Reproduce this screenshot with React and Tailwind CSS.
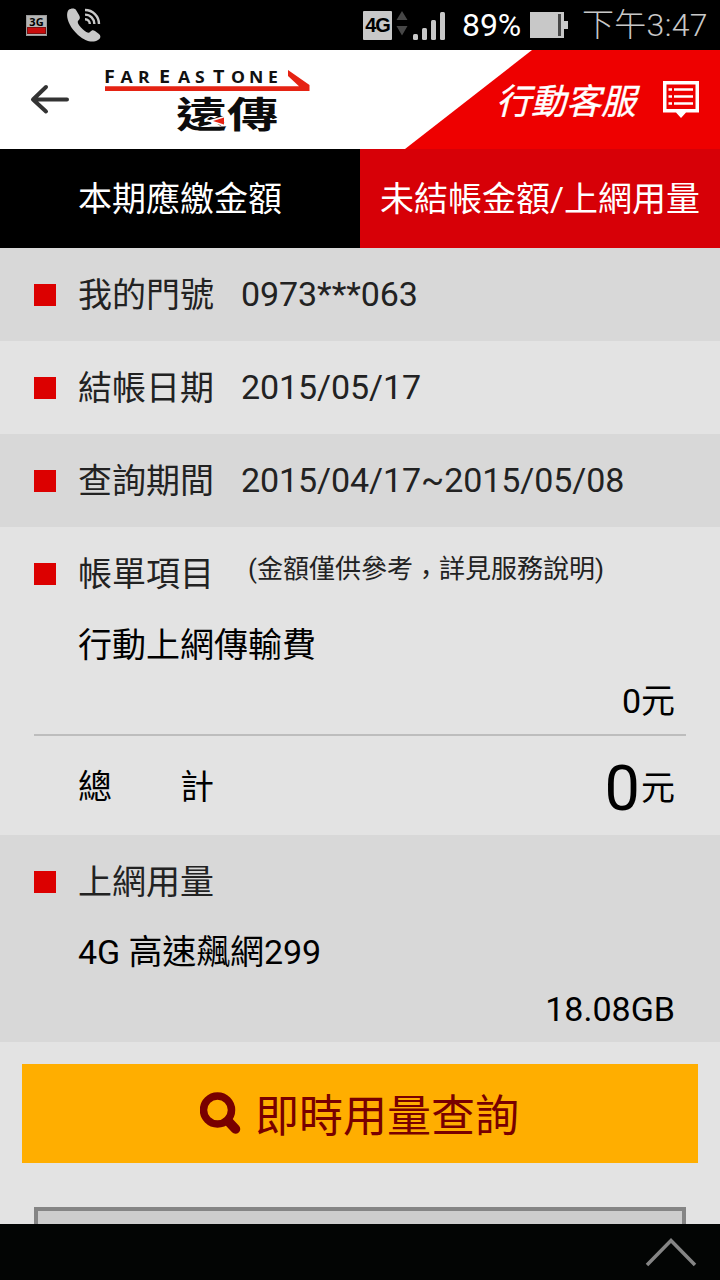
import React from 'react';

const infoRows = [
    { label: '我的門號', value: '0973***063', bg: 'bg-[#d8d8d8]' },
    { label: '結帳日期', value: '2015/05/17', bg: 'bg-[#e3e3e3]' },
    { label: '查詢期間', value: '2015/04/17~2015/05/08', bg: 'bg-[#d8d8d8]' },
];

// x position and size of every letter in the wordmark
const logoLetters = [
    { char: 'F', x: 104, size: 18 },
    { char: 'A', x: 120.5, size: 16 },
    { char: 'R', x: 138, size: 16 },
    { char: 'E', x: 159, size: 18 },
    { char: 'A', x: 178, size: 16 },
    { char: 'S', x: 195, size: 16 },
    { char: 'T', x: 213, size: 18 },
    { char: 'O', x: 231, size: 16 },
    { char: 'N', x: 249, size: 16 },
    { char: 'E', x: 268, size: 16 },
];

function StatusBar() {
    return (
        <div className="flex h-[50px] shrink-0 items-center bg-black">
            <div className="ml-[26px] flex h-[21px] w-[21px] flex-col border border-[#9a9a9a] bg-[#b5b5b5]">
                <span className="h-[11px] text-center font-['Open_Sans',sans-serif] text-[11px] leading-[11px] font-bold text-black">3G</span>
                <span className="h-[7px] border border-[#7a1010] bg-[#c80c0c]"></span>
            </div>
            <svg className="ml-[19px]" width="36" height="38" viewBox="66 6 36 38">
                <path d="M68.500 10C71 8 75 8 76 10L79 15C80.500 18 80 19 78 21C77 22.500 79 25.500 83 29.500C87 33 89 33.500 90 32C92 30 93 30 95 31L99 34C101 36 101 38 98 40C93 43 86 42 78 35C68 26 65 15 68.500 10Z" fill="#c8c8c8" />
                <path d="M85 10a14 14 0 0 1 14 14M85 14.600a9.400 9.400 0 0 1 9.400 9.400M85 19.200a4.800 4.800 0 0 1 4.800 4.800" fill="none" stroke="#c8c8c8" strokeWidth="2.400" />
            </svg>
            <div className="ml-[261px] flex h-[29px] w-[29px] items-center justify-center rounded-[1px] bg-[#c8c8c8] font-['Liberation_Sans',sans-serif] text-[20px] font-bold tracking-tighter text-black">
                4G
            </div>
            <svg className="ml-[4px]" width="50" height="32" viewBox="396 10 50 32">
                <path d="M396.500 21L402 12L407.500 21ZM396.500 27H407.500L402 36.500Z" fill="#474747" />
                <rect x="413" y="35" width="5" height="6" rx="1.500" fill="#c8c8c8" />
                <rect x="422" y="29" width="5" height="12" rx="1.500" fill="#c8c8c8" />
                <rect x="431" y="21" width="5" height="20" rx="1.500" fill="#c8c8c8" />
                <rect x="440" y="13" width="5" height="28" rx="1.500" fill="#c8c8c8" />
            </svg>
            <span className="ml-[16px] w-[60px] text-[32px] leading-[50px] tracking-[-0.1px] text-white">89%</span>
            <svg className="ml-[8px]" width="38" height="26" viewBox="530 12 38 26">
                <path d="M530 12H564V21H568V29H564V38H530Z" fill="#c8c8c8" />
                <rect x="558" y="14" width="3" height="22" fill="#474747" />
            </svg>
            <span className="ml-[14px] text-[32px] leading-[50px] font-light tracking-[0.3px] whitespace-nowrap text-[#c8c8c8]">下午3:47</span>
        </div>
    );
}

function Logo() {
    return (
        <svg className="ml-[31px] overflow-visible" width="214" height="94" viewBox="100 53 214 94">
            {logoLetters.map((item, index) => (
                <text key={index} transform={`translate(${item.x} 82.8) scale(1.1 1)`} fontSize={item.size} fontWeight="700" fontFamily="'Open Sans', sans-serif" fill="#111">
                    {item.char}
                </text>
            ))}
            <path d="M105 86.300H299L288 76V70L309.500 85V91H105Z" fill="#e52313" />
            <text transform="translate(176 127.500) scale(1.42 1)" fontSize="36" fontWeight="700" fontFamily="'Noto Sans CJK TC', sans-serif" fill="#0c0c0c">
                遠傳
            </text>
            <path d="M206 121L224 116V126Z" fill="#fff" />
            <path d="M213 121L224 117.500V124.500Z" fill="#e52313" />
        </svg>
    );
}

function Header() {
    return (
        <div className="flex h-[99px] shrink-0 bg-white">
            <div className="flex items-center">
                <svg className="ml-[30px]" width="40" height="32" viewBox="30 84 40 32">
                    <path d="M67 99.500H34M46 87L33 99.500L46 111.500" fill="none" stroke="#333" strokeWidth="4" strokeLinecap="round" strokeLinejoin="round" />
                </svg>
                <div className="-ml-px">
                    <Logo />
                </div>
            </div>
            <div className="ml-auto flex w-[315px] items-center bg-[#ee0000] [clip-path:polygon(127px_0,100%_0,100%_100%,0_100%)]">
                <span className="ml-[91px] pt-[6px] text-[35px] leading-[48px] text-white italic [-webkit-text-stroke:0.4px_white]">行動客服</span>
                <svg className="ml-[27px]" width="36" height="38" viewBox="663 81 36 38">
                    <path d="M663 81H699V112.500H686L681 118L676 112.500H663ZM666.500 84.500V109H695.500V84.500Z" fill="#fff" fillRule="evenodd" />
                    <path d="M668.500 89.500H672M668.500 96.500H672M668.500 103.500H672M674 89.500H693M674 96.500H693M674 103.500H693" stroke="#fff" strokeWidth="2.600" />
                </svg>
            </div>
        </div>
    );
}

function Title({ label, children }) {
    return (
        <div className="flex h-[93px] items-center pl-[34px] text-[#222]">
            <span className="mt-px h-[22px] w-[22px] bg-[#dc0000]"></span>
            <span className="ml-[22px] w-[163px]">{label}</span>
            {children}
        </div>
    );
}

function App() {
    return (
        <div className="flex h-[1280px] w-[720px] flex-col overflow-hidden bg-[#e3e3e3] font-[Roboto,'Noto_Sans_CJK_TC',sans-serif] text-[34px] leading-[48px] text-black" lang="zh-TW">
            <StatusBar />
            <Header />
            <div className="grid h-[99px] shrink-0 grid-cols-2 text-white">
                <button className="bg-black">本期應繳金額</button>
                <button className="bg-[#d70007] whitespace-nowrap">未結帳金額/上網用量</button>
            </div>

            {infoRows.map((item, index) => (
                <div key={index} className={item.bg}>
                    <Title label={item.label}>
                        <span className="mb-[2px] tracking-[-0.08px]">{item.value}</span>
                    </Title>
                </div>
            ))}

            <div className="h-[308px] shrink-0 bg-[#e3e3e3]">
                <Title label="帳單項目">
                    <span className="mb-[9px] ml-[7px] text-[26px]">
                        (金額僅供參考<span className="relative top-[6px]">，</span>詳見服務說明)
                    </span>
                </Title>
                <div className="pt-px pl-[78px] leading-[48px]">行動上網傳輸費</div>
                <div className="pr-[45px] text-right leading-[65px]">0元</div>
                <div className="mx-[34px] h-[2px] bg-[#bdbdbd]"></div>
                <div className="flex h-[99px] items-center justify-between pr-[45px] pl-[78px]">
                    <span className="pt-[2px]">總　　計</span>
                    <span className="flex items-center">
                        <span className="pt-[7px] pr-px text-[63px]">0</span>
                        <span className="pt-[5px]">元</span>
                    </span>
                </div>
            </div>

            <div className="h-[207px] shrink-0 bg-[#d8d8d8]">
                <Title label="上網用量" />
                <div className="pl-[78px] leading-[49px] tracking-[-0.1px]">4G 高速飆網299</div>
                <div className="pr-[45px] text-right leading-[65px]">18.08GB</div>
            </div>

            <button className="mx-[22px] mt-[22px] flex h-[99px] shrink-0 items-center bg-[#ffae00] pl-[178px] text-[44px] text-[#780000]">
                <svg width="42" height="44" viewBox="0 0 42 44">
                    <circle cx="17.500" cy="18" r="14" fill="none" stroke="currentColor" strokeWidth="7.500" />
                    <path d="M28 29L35.500 37" stroke="currentColor" strokeWidth="9.500" strokeLinecap="round" />
                </svg>
                <span className="ml-[13px] pt-[6px]">即時用量查詢</span>
            </button>

            <div className="mx-[34px] mt-[44px] min-h-0 flex-1 border-4 border-b-0 border-[#858585] bg-[#cdcdcd]"></div>

            <div className="flex h-[56px] shrink-0 items-center justify-end bg-[#030504] pr-[22px]">
                <svg width="54" height="32" viewBox="644 1236 54 32">
                    <path d="M647 1265L671 1240.500L695 1265" fill="none" stroke="#858585" strokeWidth="3.500" />
                </svg>
            </div>
        </div>
    );
}

export default App;
